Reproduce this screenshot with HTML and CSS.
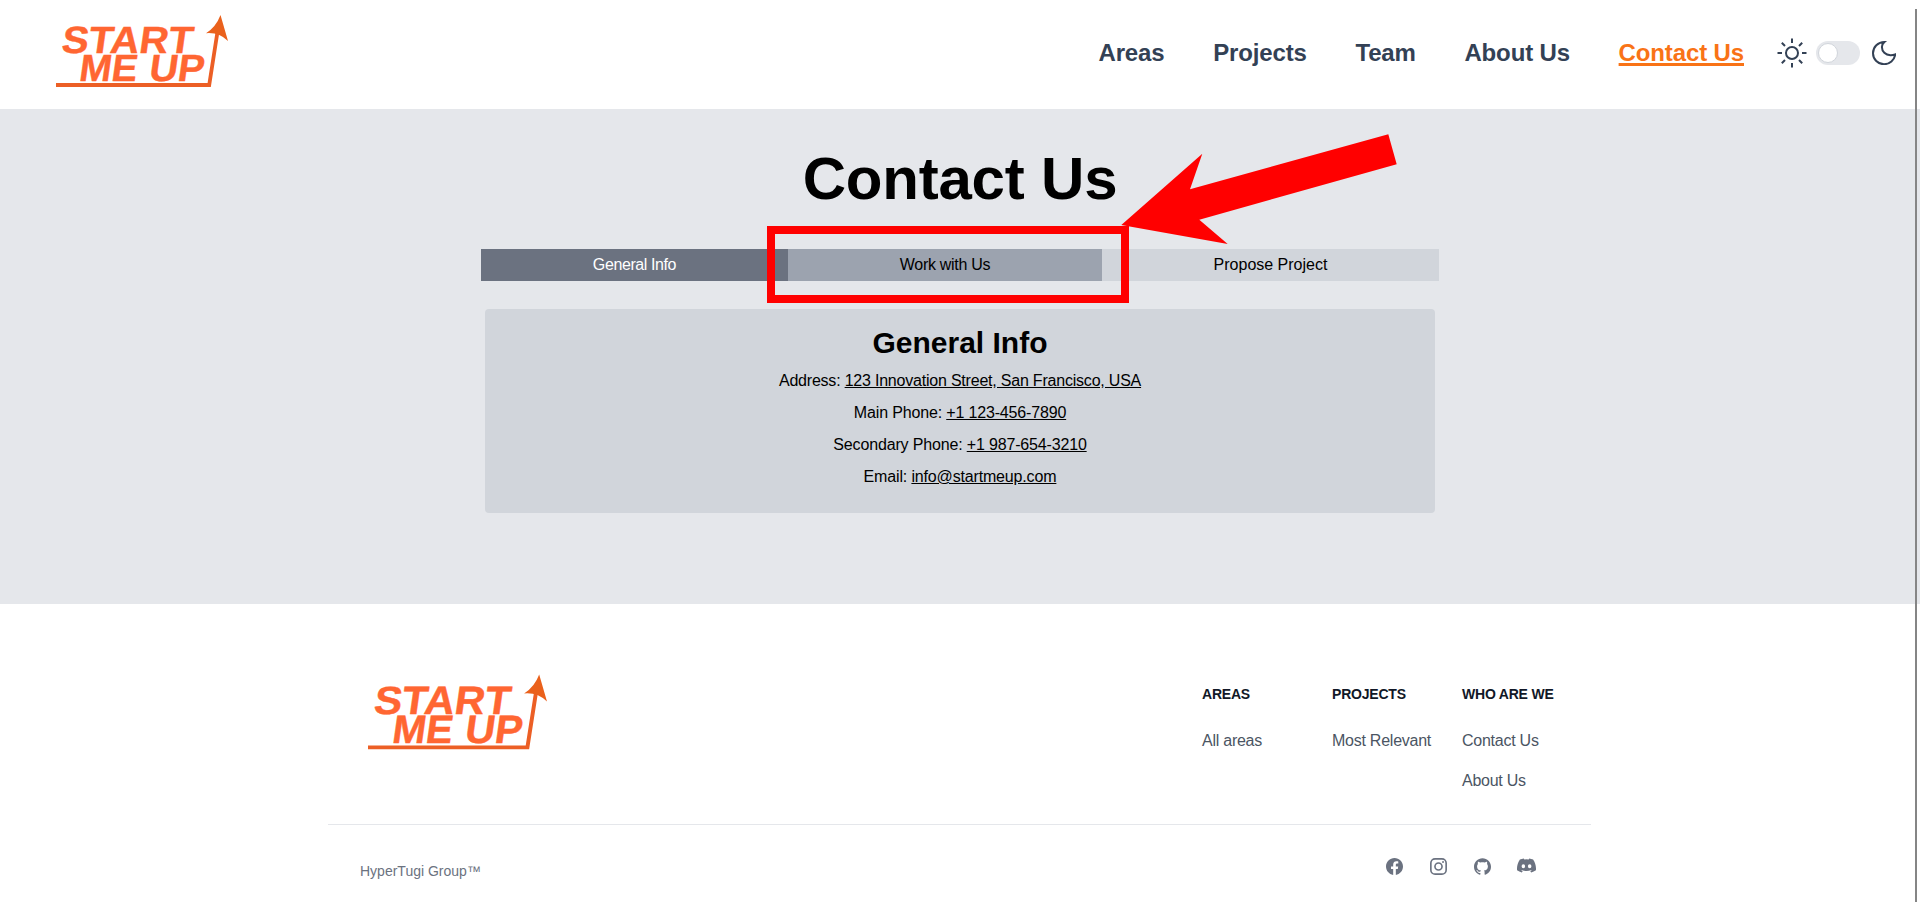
FILE: index.html
```html
<!DOCTYPE html>
<html lang="en">
<head>
<meta charset="utf-8">
<title>Contact Us</title>
<link rel="stylesheet" href="styles.css">
</head>
<body>
<svg width="0" height="0" class="defs">
  <symbol id="logo" viewBox="0 0 172 72" overflow="visible">
    <g class="logo-text">
      <text transform="translate(4.500 37.900) skewX(-8)" textLength="131" lengthAdjust="spacingAndGlyphs">START</text>
      <text transform="translate(22 66) skewX(-8)" textLength="58" lengthAdjust="spacingAndGlyphs">ME</text>
      <text transform="translate(92 66) skewX(-8)" textLength="55" lengthAdjust="spacingAndGlyphs">UP</text>
    </g>
    <path d="M0 70H153.200L161.300 18" fill="none" stroke="#ec5f25" stroke-width="3.800"/>
    <path d="M164.500 0L172 26Q163 17 150 18.200Q160 12 164.500 0Z" fill="#ea611c"/>
  </symbol>
</svg>
<header class="header">
  <svg class="logo"><use href="#logo"/></svg>
  <nav class="nav">
    <a>Areas</a><a>Projects</a><a>Team</a><a>About Us</a><a class="active">Contact Us</a>
  </nav>
  <div class="theme">
    <svg class="sun" viewBox="0 0 30 30"><circle cx="15" cy="15" r="6"/><path d="M15 0.500V5M15 25V29.500M.5 15H5M25 15H29.500M4.800 4.800L8 8M22 22L25.200 25.200M4.800 25.200L8 22M22 8L25.200 4.800"/></svg>
    <span class="toggle"><span class="knob"></span></span>
    <svg class="moon" viewBox="0 0 24 24"><path d="M12.400 1C6 1 1 6 1 12.200C1 18.300 6 23.200 12 23.200C17.500 23.200 22.600 19 23.200 13.400C21.500 14 20 14.300 18.400 14.200C13.500 14 9.900 10.500 9.900 6C9.900 4 10.900 2.300 12.400 1Z"/></svg>
  </div>
</header>
<main class="main">
  <h1>Contact Us</h1>
  <div class="tabs">
    <div class="tab selected">General Info</div><div class="tab hovered">Work with Us</div><div class="tab">Propose Project</div>
  </div>
  <section class="card">
    <h2>General Info</h2>
    <p class="address">Address: <a>123 Innovation Street, San Francisco, USA</a></p>
    <p>Main Phone: <a>+1 123-456-7890</a></p>
    <p>Secondary Phone: <a>+1 987-654-3210</a></p>
    <p>Email: <a>info@startmeup.com</a></p>
  </section>
</main>
<footer class="footer">
  <div class="footer-top">
    <svg class="footer-logo"><use href="#logo"/></svg>
    <div class="columns">
      <div><h3>AREAS</h3><a>All areas</a></div>
      <div><h3>PROJECTS</h3><a>Most Relevant</a></div>
      <div><h3>WHO ARE WE</h3><a>Contact Us</a><a>About Us</a></div>
    </div>
  </div>
  <div class="footer-bottom">
    <span>HyperTugi Group™</span>
    <div class="social">
      <svg viewBox="0 0 24 24"><path d="M24 12.073C24 5.405 18.627 0 12 0S0 5.405 0 12.073C0 18.100 4.388 23.094 10.125 24V15.563H7.078V12.073H10.125V9.413C10.125 6.387 11.917 4.716 14.658 4.716C15.970 4.716 17.344 4.951 17.344 4.951V7.923H15.831C14.340 7.923 13.875 8.853 13.875 9.808V12.073H17.203L16.671 15.563H13.875V24C19.612 23.094 24 18.100 24 12.073Z"/></svg>
      <svg viewBox="0 0 24 24" class="outline"><rect x="1.200" y="1.200" width="21.600" height="21.600" rx="6"/><circle cx="12" cy="12" r="5"/><circle class="dot" cx="18.400" cy="5.600" r="1.400"/></svg>
      <svg viewBox="0 0 24 24"><path d="M12 .297C5.370.297 0 5.670 0 12.297C0 17.600 3.438 22.097 8.205 23.682C8.805 23.795 9.025 23.424 9.025 23.105V21.065C5.672 21.789 4.968 19.455 4.968 19.455C4.422 18.070 3.633 17.700 3.633 17.700C2.546 16.956 3.717 16.971 3.717 16.971C4.922 17.055 5.555 18.207 5.555 18.207C6.625 20.042 8.364 19.512 9.050 19.205C9.158 18.429 9.467 17.900 9.810 17.600C7.145 17.300 4.344 16.268 4.344 11.670C4.344 10.360 4.809 9.290 5.579 8.450C5.444 8.147 5.039 6.927 5.684 5.274C5.684 5.274 6.689 4.952 8.984 6.504C10.944 5.968 13.044 5.964 14.984 6.504C17.264 4.952 18.269 5.274 18.269 5.274C18.914 6.927 18.509 8.147 18.389 8.450C19.154 9.290 19.619 10.360 19.619 11.670C19.619 16.280 16.814 17.295 14.144 17.590C14.564 17.950 14.954 18.686 14.954 19.810V23.096C14.954 23.411 15.164 23.786 15.779 23.666C20.565 22.092 24 17.592 24 12.297C24 5.670 18.627.297 12 .297Z"/></svg>
      <svg class="discord" viewBox="0 0 24 18"><path fill-rule="evenodd" d="M20.317 1.370A19.800 19.800 0 0 0 15.432 0L14.700 1.400Q12 1 9.300 1.400L8.560 0A19.740 19.740 0 0 0 3.677 1.370C.533 5.990-.32 10.610.09 15.100A19.900 19.900 0 0 0 6.084 17.980L7.300 16Q6.300 15.600 5.400 15L5.900 14.600Q12 17.300 18.100 14.600L18.600 15Q17.700 15.600 16.700 16L17.920 17.980A19.840 19.840 0 0 0 23.900 15.100C24.400 9.900 23.100 5.340 20.317 1.370ZM8.020 12.330A2.200 2.450 0 1 1 8.020 7.400A2.200 2.450 0 1 1 8.020 12.330ZM16 12.330A2.200 2.450 0 1 1 16 7.400A2.200 2.450 0 1 1 16 12.330Z"/></svg>
    </div>
  </div>
</footer>
<svg class="pointer" viewBox="0 0 300 120"><path d="M268.300 3.300L70 58.300L82.300 22.700L1.300 94L107.700 113L79.300 88.700L276.700 33.300Z" fill="red"/></svg>
<div class="highlight"></div>
<div class="scroll-edge"></div>
</body>
</html>
```
FILE: styles.css
```css
* { box-sizing: border-box; }
body { margin: 0; height: 914px; overflow: hidden; position: relative; background: #fff; color: #000; font: 16px/24px "Liberation Sans", Arial, sans-serif; }
h1, h2, h3, p { margin: 0; }
.defs { position: absolute; }
.logo-text { font: bold 38px "Liberation Sans", Arial, sans-serif; fill: #ff6632; stroke: #ff6632; stroke-width: 0.4px; }
.header { height: 109px; display: flex; align-items: flex-start; padding: 15px 24px 0 56px; }
.logo { width: 172px; height: 72px; overflow: visible; }
.nav { margin-left: auto; display: flex; gap: 48.6px; font-size: 24px; line-height: 32px; font-weight: bold; color: #334155; padding-top: 22px; letter-spacing: -0.13px; }
.nav .active { color: #f97316; text-decoration: underline; text-decoration-thickness: 3px; text-underline-offset: 2px; text-decoration-skip-ink: none; }
.theme { display: flex; align-items: center; margin-left: 33px; padding-top: 23px; height: 53px; }
.theme svg { fill: none; stroke: #334155; stroke-width: 2; }
.sun { width: 30px; height: 30px; }
.toggle { width: 44px; height: 24px; border-radius: 12px; background: #e5e7eb; margin: 0 12px 0 9px; padding: 2px; }
.knob { display: block; width: 20px; height: 20px; border-radius: 50%; background: #fff; border: 1px solid #d1d5db; }
.moon { width: 24px; height: 24px; }
.main { height: 495px; background: #e5e7eb; padding-top: 40px; display: flex; flex-direction: column; align-items: center; }
h1 { font-size: 60px; line-height: 60px; letter-spacing: -0.2px; }
.tabs { display: flex; width: 958px; height: 32px; margin-top: 40px; background: #d1d5db; text-align: center; line-height: 32px; }
.tab { width: 337px; }
.tab.selected { width: 307px; background: #6b7280; color: #fff; letter-spacing: -0.4px; }
.tab.hovered { width: 314px; background: #9ca3af; letter-spacing: -0.3px; }
.card { width: 950px; height: 204px; margin-top: 28px; padding-top: 16px; background: #d1d5db; border-radius: 4px; text-align: center; }
.card h2 { font-size: 30px; line-height: 36px; margin-bottom: 4px; }
.card p { line-height: 32px; letter-spacing: -0.16px; }
.card .address { letter-spacing: -0.21px; }
.card a { text-decoration: underline; }
.footer { width: 1263px; margin: 0 auto 0 328px; }
.footer-top { height: 221px; border-bottom: 1px solid #e5e7eb; display: flex; justify-content: space-between; padding: 70px 0 0 40px; }
.footer-logo { width: 179px; height: 76px; overflow: visible; }
.columns { display: grid; grid-template-columns: 130px 130px 129px; padding-top: 8px; }
.columns h3 { font-size: 14px; line-height: 24px; color: #111827; margin-bottom: 23px; letter-spacing: -0.2px; }
.columns a { display: block; color: #4b5563; margin-bottom: 16px; white-space: nowrap; letter-spacing: -0.25px; }
.footer-bottom { display: flex; justify-content: space-between; padding: 33px 55.5px 0 32px; font-size: 14px; line-height: 26px; color: #6b7280; }
.social { display: flex; gap: 27px; height: 18px; }
.social svg { width: 17px; height: 17px; fill: #6b7280; }
.social .outline { fill: none; stroke: #6b7280; stroke-width: 2.3; }
.social .outline .dot { fill: #6b7280; stroke: none; }
.social .discord { width: 19px; height: 15px; margin-left: -1px; }
.highlight { position: absolute; left: 767px; top: 226px; width: 362px; height: 77px; border: 8px solid red; }
.pointer { position: absolute; left: 1120px; top: 131px; width: 300px; height: 120px; }
.scroll-edge { position: absolute; left: 1915px; top: 9px; width: 2px; height: 893px; background: #858585; }
```
